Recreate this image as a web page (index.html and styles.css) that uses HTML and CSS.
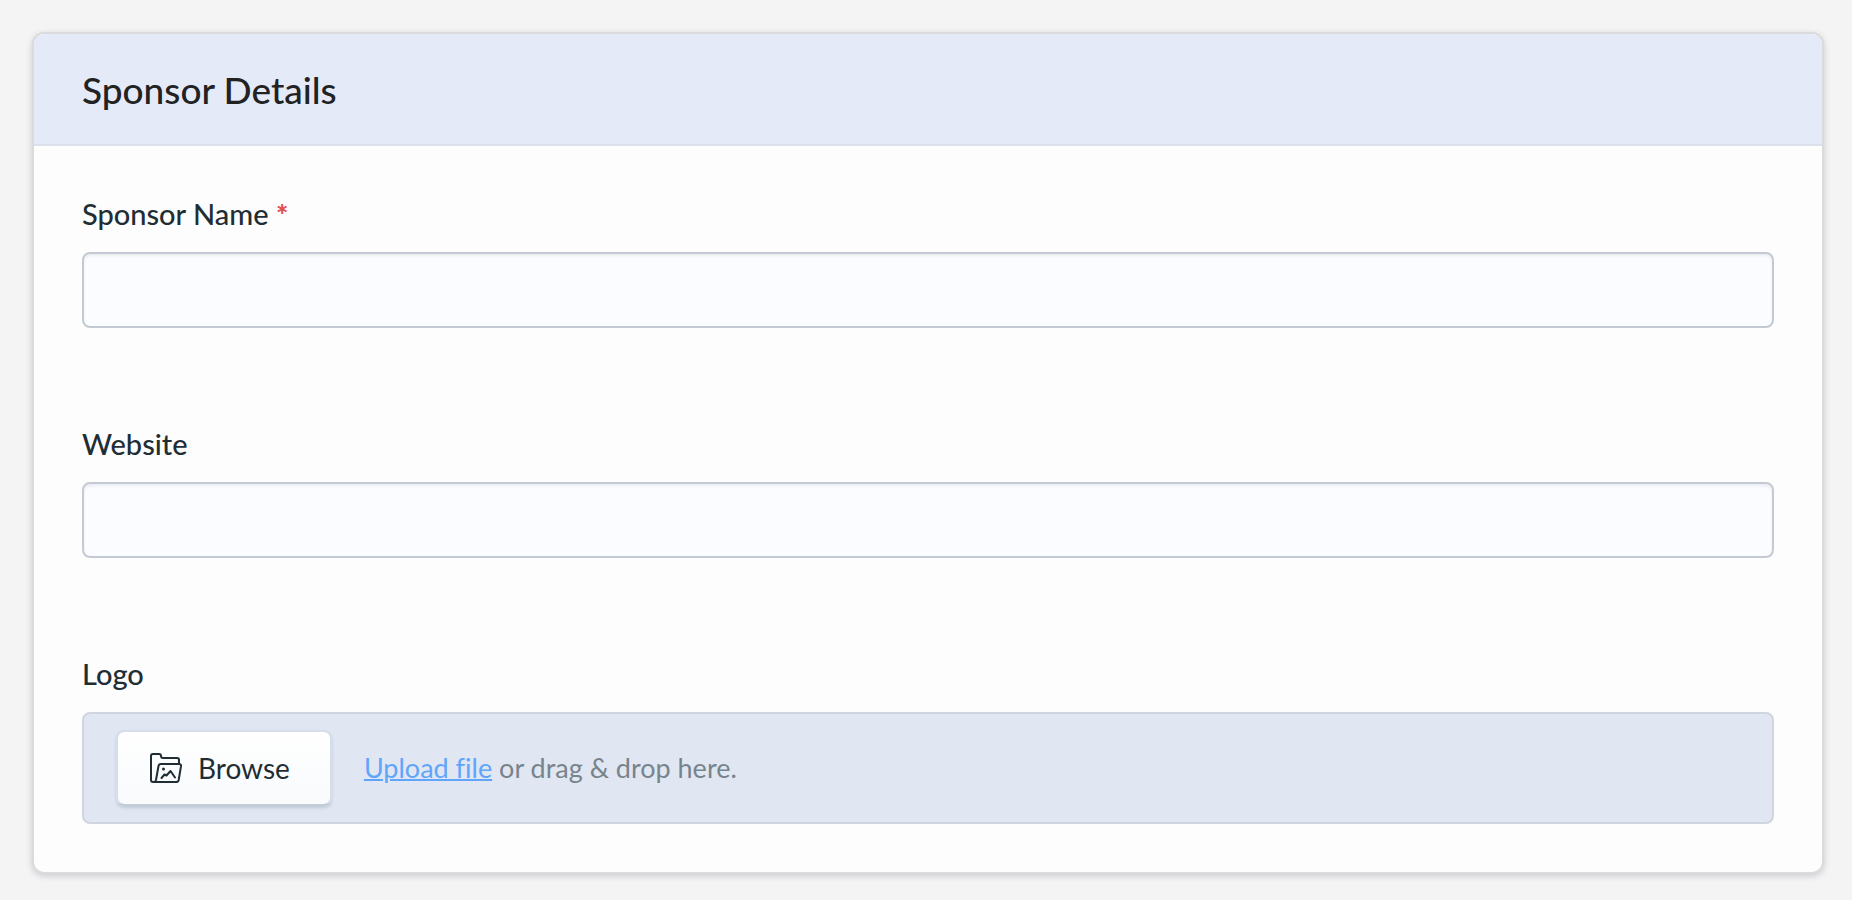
FILE: index.html
```html
<!DOCTYPE html>
<html lang="en">
<head>
  <meta charset="UTF-8" />
  <meta name="viewport" content="width=device-width, initial-scale=1.0"/>
  <title>Sponsor Details</title>
  <link rel="stylesheet" href="styles.css">
</head>
<body>
  <form class="card">
    <h1 class="card-header">Sponsor Details</h1>
    <div class="card-body">
      <div class="field">
        <label for="name">Sponsor Name <span class="required">*</span></label>
        <input type="text" id="name" name="name" required />
      </div>
      <div class="field">
        <label for="website">Website</label>
        <input type="text" id="website" name="website" />
      </div>
      <div class="field">
        <label for="browse">Logo</label>
        <div class="dropzone">
          <button type="button" class="browse" id="browse">
            <svg class="icon" viewBox="0 0 32 30" fill="none" stroke="currentColor" stroke-width="2" stroke-linecap="round" stroke-linejoin="round" aria-hidden="true">
              <path d="M4 29H3Q1 29 1 27V3Q1 1 3 1H9Q11 1 11 3V3Q11 5 13 5H27Q29 5 29 7V11"/>
              <path d="M4 29Q5.500 29 6 27L8.500 13Q8.900 11 11 11H29Q31.300 11 31 13.200L28.700 27Q28.300 29 26 29Z"/>
              <path d="M11.500 25L14.500 21.500L16.500 22.500L20.500 18L25 24.500"/>
              <circle cx="13.500" cy="16" r="1.500" fill="currentColor" stroke="none"/>
            </svg>
            Browse
          </button>
          <p class="hint"><a href="#" id="upload">Upload file</a> or drag &amp; drop here.</p>
          <input type="file" id="logo" name="logo" accept="image/*" aria-label="Logo" hidden />
        </div>
      </div>
    </div>
  </form>
  <script>
    const logo = document.getElementById("logo");
    document.getElementById("browse").addEventListener("click", function () {
      logo.click();
    });
    document.getElementById("upload").addEventListener("click", function (e) {
      e.preventDefault();
      logo.click();
    });
  </script>
</body>
</html>
```

FILE: styles.css
```css
* {
  box-sizing: border-box;
}
body {
  font-family: Lato, sans-serif;
  font-size: 28px;
  font-variant-ligatures: none;
  line-height: 40px;
  background: #f4f4f4;
  color: #1f2d35;
  margin: 0;
  padding: 32px 28px 24px 32px;
}
.card {
  background: #fdfdfd;
  border: 2px solid #dbdbdd;
  border-radius: 12px;
  box-shadow: 0 2px 6px rgba(40,40,70,0.2);
  overflow: hidden;
}
.card-header {
  margin: 0;
  padding: 32px 48px 30px;
  background: #e4eaf8;
  border-bottom: 2px solid #dbe0ea;
  color: #222;
  font-size: 37px;
  font-weight: 500;
  line-height: 48px;
}
.card-body {
  display: flex;
  flex-direction: column;
  gap: 96px;
  padding: 48px;
}
.field {
  display: flex;
  flex-direction: column;
  gap: 18px;
}
label {
  font-size: 29px;
  font-weight: 500;
}
.required {
  color: #e0524b;
  font-weight: 900;
}
input[type="text"] {
  width: 100%;
  height: 76px;
  padding: 0 20px;
  background: #fbfcff;
  border: 2px solid #c4cad3;
  border-radius: 8px;
  box-shadow: inset 0 2px 3px rgba(40,50,80,0.08);
  color: inherit;
  font: inherit;
}
.dropzone {
  display: flex;
  align-items: center;
  gap: 32px;
  height: 112px;
  padding: 0 32px;
  background: #e0e7f3;
  border: 2px solid #cfd4de;
  border-radius: 8px;
}
.browse {
  display: flex;
  align-items: center;
  gap: 16px;
  height: 76px;
  padding: 0 40px 0 32px;
  background: linear-gradient(#fff, #f8fafc) padding-box;
  border: 2px solid #d5deea;
  border-bottom-color: #c3ccd7;
  border-radius: 8px;
  box-shadow: 0 2px 3px rgba(60,90,110,0.2);
  color: inherit;
  font: inherit;
  cursor: pointer;
}
.icon {
  width: 32px;
  height: 30px;
}
.hint {
  margin: 0;
  color: #78848c;
  font-size: 27px;
}
.hint a {
  color: #60a5fa;
  text-decoration-thickness: 2px;
}
```
